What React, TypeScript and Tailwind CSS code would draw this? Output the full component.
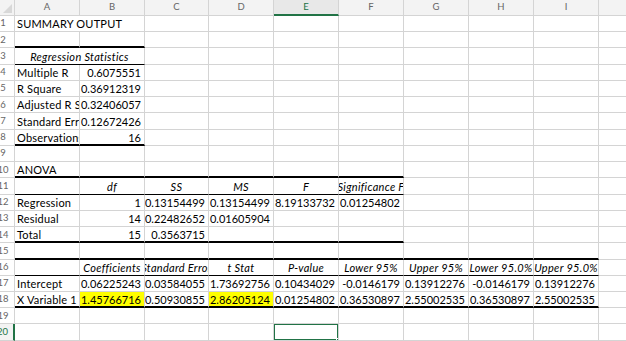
import React from "react";

type Cell = { t?: string; a?: "l" | "r" | "c"; i?: boolean; y?: boolean; span?: number };

const cols = ["A", "B", "C", "D", "E", "F", "G", "H", "I", ""];

const L = (t: string): Cell => ({ t, a: "l" });
const R = (t: string): Cell => ({ t, a: "r" });
const H = (t: string): Cell => ({ t, a: "c", i: true });
const E: Cell = {};

// rows 1..20, columns A..J
const rows: Cell[][] = [
  [{ t: "SUMMARY OUTPUT", a: "l", span: 2 }],
  [],
  [{ t: "Regression Statistics", a: "c", i: true, span: 2 }],
  [L("Multiple R"), R("0.6075551")],
  [L("R Square"), R("0.36912319")],
  [L("Adjusted R Square"), R("0.32406057")],
  [L("Standard Error"), R("0.12672426")],
  [L("Observations"), R("16")],
  [],
  [L("ANOVA")],
  [E, H("df"), H("SS"), H("MS"), H("F"), H("Significance F")],
  [L("Regression"), R("1"), R("0.13154499"), R("0.13154499"), R("8.19133732"), R("0.01254802")],
  [L("Residual"), R("14"), R("0.22482652"), R("0.01605904")],
  [L("Total"), R("15"), R("0.3563715")],
  [],
  [E, H("Coefficients"), H("Standard Error"), H("t Stat"), H("P-value"), H("Lower 95%"), H("Upper 95%"), H("Lower 95.0%"), H("Upper 95.0%")],
  [L("Intercept"), R("0.06225243"), R("0.03584055"), R("1.73692756"), R("0.10434029"), R("-0.0146179"), R("0.13912276"), R("-0.0146179"), R("0.13912276")],
  [L("X Variable 1"), { t: "1.45766716", a: "r", y: true }, R("0.50930855"), { t: "2.86205124", a: "r", y: true }, R("0.01254802"), R("0.36530897"), R("2.55002535"), R("0.36530897"), R("2.55002535")],
  [],
  [],
];

function bottom(row: number, col: number) {
  const thick: [number, number][] = [[2, 1], [8, 1], [10, 5], [14, 5], [15, 8], [18, 8]];
  const thin: [number, number][] = [[3, 1], [11, 5], [16, 8]];
  if (thick.some(([r, c]) => r === row && col <= c)) return "thick";
  if (thin.some(([r, c]) => r === row && col <= c)) return "thin";
  return "none";
}

export default function App() {
  const cells: React.ReactNode[] = [];

  // column header row
  cells.push(
    <div key="corner" className="relative border-r border-b border-[#d4d4d4] bg-[#f3f3f3]">
      <svg className="absolute right-[2px] bottom-[2px]" width="9" height="9" viewBox="0 0 9 9">
        <polygon points="9,0 9,9 0,9" fill="#d8d8d8" />
      </svg>
    </div>
  );
  cols.forEach((c, i) =>
    cells.push(
      <div
        key={"h" + i}
        className={
          i === 4
            ? "flex items-center justify-center border-r border-[#d4d4d4] border-b-2 border-b-[#217346] bg-[#e8e8e8] pt-[1px] text-[9.5px] text-[#217346]"
            : "flex items-center justify-center border-r border-b border-[#d4d4d4] bg-[#f3f3f3] pb-[1px] text-[9.5px] text-[#666666]"
        }
      >
        {c}
      </div>
    )
  );

  rows.forEach((row, ri) => {
    const r = ri + 1;
    cells.push(
      <div
        key={"r" + r}
        className={
          r === 20
            ? "flex items-center justify-center border-r-2 border-r-[#217346] border-b border-b-[#d4d4d4] bg-[#f3f3f3] text-[9.5px] text-[#217346]"
            : "flex items-center justify-center border-r border-b border-[#d4d4d4] bg-white text-[9.5px] text-[#666666]"
        }
      >
        {r}
      </div>
    );
    let col = 0;
    while (col < 10) {
      const cell = row[col] ?? E;
      const span = cell.span ?? 1;
      const b = bottom(r, col);
      const cls = [
        "relative flex items-end overflow-hidden whitespace-nowrap border-r border-r-[#d4d4d4] text-[11px] leading-none text-black",
        span === 2 ? "col-span-2" : "",
        b === "thick" ? "border-b-2 border-b-black pb-[1px]" : b === "thin" ? "border-b border-b-black pb-[2px]" : "border-b border-b-[#d4d4d4] pb-[2px]",
        cell.a === "r" ? "justify-end pr-[3px]" : cell.a === "c" ? "justify-center" : "justify-start pl-[2px] tracking-[0.2px]",
        cell.i ? "italic tracking-[0.3px]" : "",
        cell.y ? "bg-[#ffff00]" : "",
      ].join(" ");
      cells.push(
        <div key={r + "-" + col} className={cls}>
          {cell.t && <span>{cell.t}</span>}
          {r === 20 && col === 4 && (
            <>
              <div className="absolute -left-px -top-px -right-px -bottom-px border-2 border-[#217346]" />
              <div className="absolute right-[-4px] bottom-[-4px] h-[6px] w-[6px] border border-white bg-[#217346]" />
            </>
          )}
        </div>
      );
      col += span;
    }
  });

  return (
    <div className="h-[341px] w-[626px] overflow-hidden bg-white" style={{ fontFamily: "Lato, 'Liberation Sans', sans-serif" }}>
      <div className="-ml-[8px] grid grid-cols-[23px_65px_65px_64px_65px_65px_65px_65px_65px_65px_40px] grid-rows-[16px_repeat(20,16.24px)]">
        {cells}
      </div>
    </div>
  );
}
